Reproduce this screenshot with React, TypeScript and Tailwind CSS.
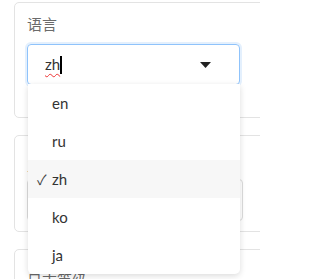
import { useState } from "react";

const LANGS = ["en", "ru", "zh", "ko", "ja"];

function Caret() {
  return (
    <svg width="11" height="6" viewBox="0 0 11 6" className="shrink-0">
      <path d="M0 0 H11 L5.5 6 Z" fill="#222" />
    </svg>
  );
}

export default function App() {
  const [value] = useState("zh");

  return (
    <div className="relative w-[260px] h-[279px] overflow-hidden bg-white font-['Lato','Noto_Sans_CJK_SC',sans-serif]">
      <div className="flex flex-col gap-[17px] pt-[2px] pl-[14px]">
        {/* 语言 */}
        <section className="w-[300px] h-[116px] rounded-[5px] border border-[#e3e3e3] px-[12px] pt-[10px]">
          <p className="text-[15px] leading-[22px] text-[#6b6b6b]">语言</p>
          <div className="mt-[9px] w-[213px] h-[41px] rounded-[4px] border border-[#8fc3fb] shadow-[0_0_0_2px_#e4f0fd] flex items-center pl-[17px] pr-[28px]">
            <span className="text-[15px] text-[#333] underline decoration-wavy decoration-[#e33] underline-offset-[3px] decoration-1">
              {value}
            </span>
            <span className="w-[2px] h-[18px] bg-black" />
            <span className="flex-1" />
            <Caret />
          </div>
        </section>

        {/* second setting */}
        <section className="w-[300px] h-[97px] rounded-[5px] border border-[#e3e3e3] px-[12px] pt-[18px]">
          <p className="text-[15px] leading-[22px] text-[#6b6b6b]">主题</p>
          <div className="mt-[3px] w-[216px] h-[42px] rounded-[4px] border border-[#dcdcdc]" />
        </section>

        {/* third setting */}
        <section className="w-[300px] h-[60px] rounded-[5px] border border-[#e3e3e3] px-[12px] pt-[19px]">
          <p className="text-[15px] leading-[22px] text-[#6b6b6b]">日志等级</p>
        </section>
      </div>

      {/* open dropdown menu */}
      <ul className="absolute left-[28px] top-[84px] w-[212px] rounded-b-[5px] bg-white shadow-[0_2px_6px_rgba(0,0,0,0.14)] py-0">
        {LANGS.map((lang) => (
          <li
            key={lang}
            className={`h-[38px] flex items-center text-[15px] text-[#333] ${
              lang === value ? "bg-[#f7f7f7]" : ""
            }`}
          >
            <span className="w-[24px] pl-[9px] text-[14px] text-[#444]">{lang === value ? "✓" : ""}</span>
            <span>{lang}</span>
          </li>
        ))}
      </ul>
    </div>
  );
}
